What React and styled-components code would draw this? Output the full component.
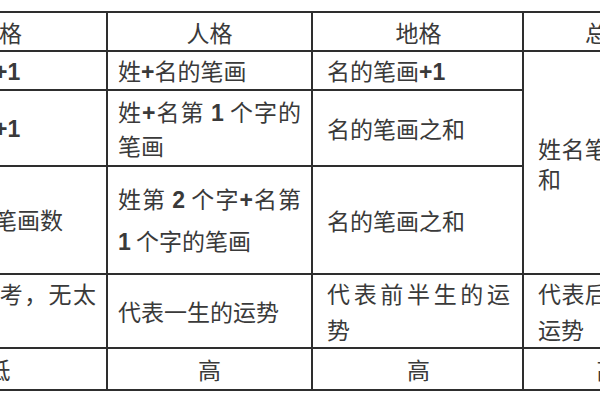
import styled, { createGlobalStyle } from "styled-components";

const GlobalStyle = createGlobalStyle`
  html, body {
    margin: 0;
    padding: 0;
    background: #fff;
  }
`;

const Page = styled.div`
  width: 600px;
  height: 400px;
  overflow: hidden;
  background: #fff;
`;

// the table is wider than the window: its left and right columns are cut off
const Table = styled.table`
  border-collapse: collapse;
  table-layout: fixed;
  width: 796px;
  margin: 11px 0 0 -110px;
  font-family: "Noto Sans CJK SC", sans-serif;
  font-size: 23px;
  color: #3a3a3a;
`;

const Col = styled.col`
  width: ${(p) => p.$w}px;
`;

const Row = styled.tr`
  height: ${(p) => p.$h}px;
`;

// padding differs per column, as in the scanned table
const pads = [
  [10, 10],
  [10, 10],
  [14, 12],
  [14, 8],
];

const Cell = styled.td`
  border: 2px solid #2e2e2e;
  padding: 0 ${(p) => pads[p.$col][1]}px 0 ${(p) => pads[p.$col][0]}px;
  line-height: ${(p) => p.$lh || 30}px;
  text-align: ${(p) => (p.$center ? "center" : "justify")};
  vertical-align: middle;
  overflow: hidden;
`;

const Num = styled.span`
  font-family: "Liberation Sans", Arial, sans-serif;
  font-weight: bold;
`;

const renderText = (s) =>
  s.split(/([+0-9]+)/).map((part, i) =>
    /^[+0-9]+$/.test(part) ? <Num key={i}>{part}</Num> : part
  );

const widths = [216, 205, 211, 164];
const header = ["天格", "人格", "地格", "总格"];

const rows = [
  {
    h: 39,
    cells: [
      { text: "姓的笔画+1" },
      { text: "姓+名的笔画" },
      { text: "名的笔画+1" },
      { text: "姓名笔画数之和", rowSpan: 3 },
    ],
  },
  {
    h: 76,
    cells: [
      { text: "姓的笔画+1" },
      { text: "姓+名第 1 个字的笔画", lh: 32 },
      { text: "名的笔画之和" },
    ],
  },
  {
    h: 108,
    cells: [
      { text: "姓第 1 字笔画数" },
      { text: "姓第 2 个字+名第 1 个字的笔画", lh: 40 },
      { text: "名的笔画之和" },
    ],
  },
  {
    h: 74,
    cells: [
      { text: "只作为参考，无太大意义", lh: 36 },
      { text: "代表一生的运势" },
      { text: "代表前半生的运势", lh: 36 },
      { text: "代表后半生的运势", lh: 36 },
    ],
  },
  {
    h: 42,
    center: true,
    cells: [{ text: "低" }, { text: "高" }, { text: "高" }, { text: "高" }],
  },
];

export default function App() {
  return (
    <Page>
      <GlobalStyle />
      <Table>
        <colgroup>
          {widths.map((w, i) => (
            <Col key={i} $w={w} />
          ))}
        </colgroup>
        <tbody>
          <Row $h={39}>
            {header.map((h, i) => (
              <Cell key={h} $col={i} $center>
                {h}
              </Cell>
            ))}
          </Row>
          {rows.map((row, r) => (
            <Row key={r} $h={row.h}>
              {row.cells.map((c, i) => (
                <Cell
                  key={i}
                  $col={i}
                  $lh={c.lh}
                  $center={row.center}
                  rowSpan={c.rowSpan}
                >
                  {renderText(c.text)}
                </Cell>
              ))}
            </Row>
          ))}
        </tbody>
      </Table>
    </Page>
  );
}
